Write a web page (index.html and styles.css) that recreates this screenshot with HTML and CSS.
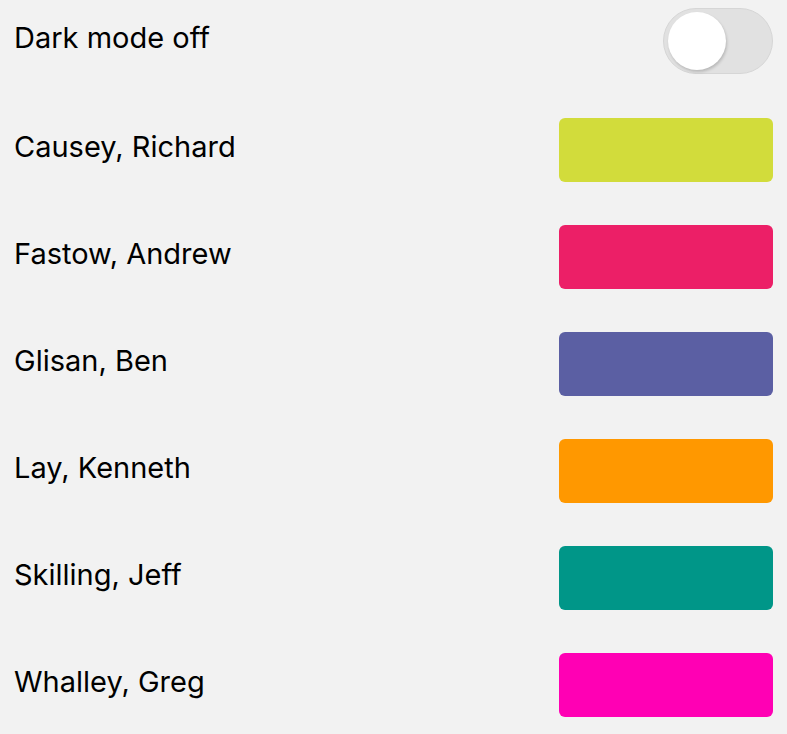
FILE: index.html
```html
<!DOCTYPE html>
<html>
<head>
<meta charset="utf-8">
<link rel="stylesheet" href="styles.css">
</head>
<body>
<div class="list">
  <div class="row toggle-row">
    <span class="label">Dark mode off</span>
    <div class="toggle"><div class="knob"></div></div>
  </div>
  <div class="row">
    <span class="label">Causey, Richard</span>
    <div class="swatch lime"></div>
  </div>
  <div class="row">
    <span class="label">Fastow, Andrew</span>
    <div class="swatch red"></div>
  </div>
  <div class="row">
    <span class="label">Glisan, Ben</span>
    <div class="swatch indigo"></div>
  </div>
  <div class="row">
    <span class="label">Lay, Kenneth</span>
    <div class="swatch orange"></div>
  </div>
  <div class="row">
    <span class="label">Skilling, Jeff</span>
    <div class="swatch teal"></div>
  </div>
  <div class="row">
    <span class="label">Whalley, Greg</span>
    <div class="swatch magenta"></div>
  </div>
</div>
</body>
</html>
```
FILE: styles.css
```css
html, body {
  margin: 0;
  padding: 0;
  background: #f2f2f2;
}
body {
  font-family: Inter, "Noto Sans", sans-serif;
  color: #000;
}
.list {
  display: flex;
  flex-direction: column;
  gap: 43px;
  padding: 8px 14px 0 14px;
}
.row {
  display: flex;
  align-items: center;
  justify-content: space-between;
  height: 64px;
}
.toggle-row {
  height: 66px;
  margin-bottom: 1px;
}
.label {
  font-size: 29px;
  line-height: 1;
  margin-top: -8px;
}
.toggle {
  box-sizing: border-box;
  width: 110px;
  height: 66px;
  border-radius: 33px;
  background: #e1e1e1;
  border: 1px solid #d6d6d6;
  display: flex;
  align-items: center;
  padding-left: 4px;
}
.knob {
  width: 58px;
  height: 58px;
  border-radius: 50%;
  background: #fff;
  box-shadow: 1px 2px 3px rgba(0,0,0,0.18);
}
.swatch {
  width: 214px;
  height: 64px;
  border-radius: 6px;
}
.lime { background: #d2dc3b; }
.red { background: #ec1f67; }
.indigo { background: #5b5fa3; }
.orange { background: #ff9800; }
.teal { background: #009688; }
.magenta { background: #ff00b4; }
```
